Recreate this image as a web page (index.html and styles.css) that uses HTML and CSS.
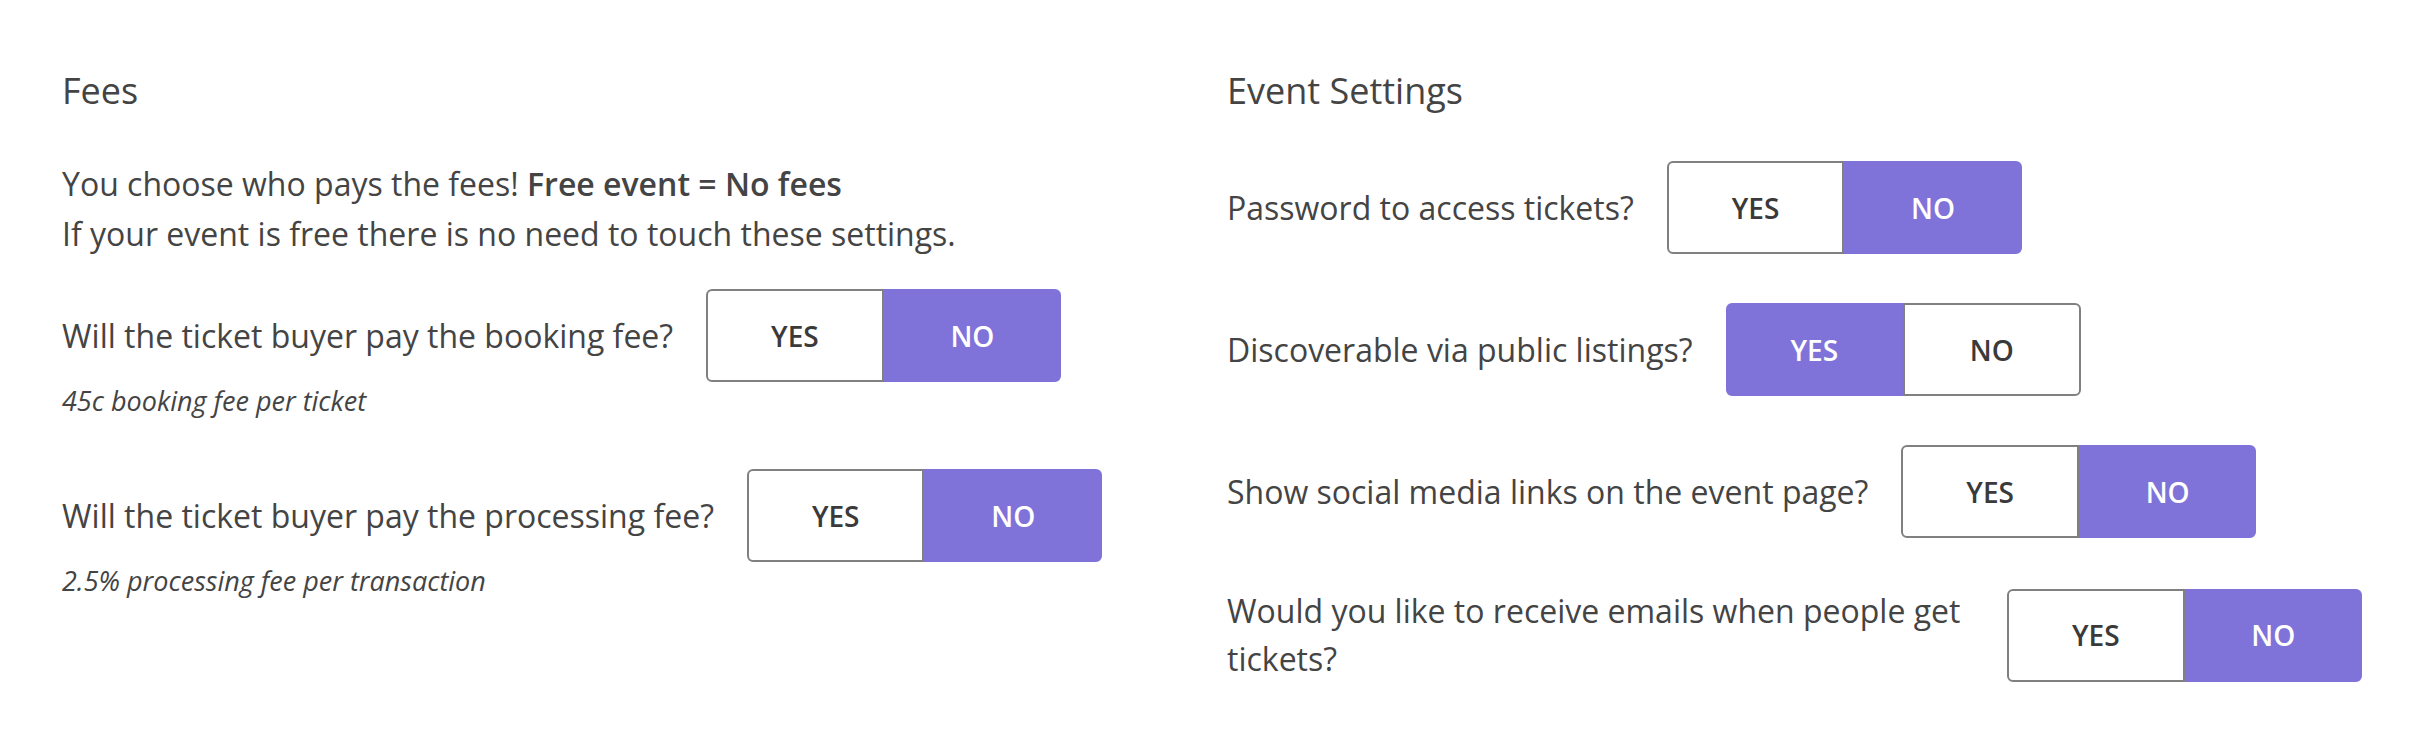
FILE: index.html
```html
<!DOCTYPE html>
<html lang="en">
<head>
<meta charset="utf-8">
<title>Fees and Event Settings</title>
<link rel="stylesheet" href="styles.css">
</head>
<body>
<div class="page">
  <section class="col">
    <h2 class="heading">Fees</h2>
    <p class="intro">You choose who pays the fees! <strong>Free event = No fees</strong><br>If your event is free there is no need to touch these settings.</p>
    <div class="setting first">
      <div class="row">
        <span class="label">Will the ticket buyer pay the booking fee?</span>
        <div class="toggle">
          <button class="opt">YES</button>
          <button class="opt active">NO</button>
        </div>
      </div>
      <p class="note">45c booking fee per ticket</p>
    </div>
    <div class="setting noted">
      <div class="row">
        <span class="label">Will the ticket buyer pay the processing fee?</span>
        <div class="toggle">
          <button class="opt">YES</button>
          <button class="opt active">NO</button>
        </div>
      </div>
      <p class="note">2.5% processing fee per transaction</p>
    </div>
  </section>
  <section class="col">
    <h2 class="heading">Event Settings</h2>
    <div class="setting">
      <div class="row">
        <span class="label">Password to access tickets?</span>
        <div class="toggle">
          <button class="opt">YES</button>
          <button class="opt active">NO</button>
        </div>
      </div>
    </div>
    <div class="setting">
      <div class="row">
        <span class="label">Discoverable via public listings?</span>
        <div class="toggle">
          <button class="opt active">YES</button>
          <button class="opt">NO</button>
        </div>
      </div>
    </div>
    <div class="setting">
      <div class="row">
        <span class="label">Show social media links on the event page?</span>
        <div class="toggle">
          <button class="opt">YES</button>
          <button class="opt active">NO</button>
        </div>
      </div>
    </div>
    <div class="setting">
      <div class="row">
        <span class="label">Would you like to receive emails when people get tickets?</span>
        <div class="toggle">
          <button class="opt">YES</button>
          <button class="opt active">NO</button>
        </div>
      </div>
    </div>
  </section>
</div>
</body>
</html>
```

FILE: styles.css
```css
* {
  box-sizing: border-box;
}

html, body {
  margin: 0;
  padding: 0;
  background: #ffffff;
}

body {
  font-family: "Open Sans", "Noto Sans", sans-serif;
  color: #444444;
}

.page {
  display: grid;
  grid-template-columns: 1135px 1135px;
  column-gap: 30px;
  padding: 69px 62px 0 62px;
}

.col {
  display: flex;
  flex-direction: column;
}

.heading {
  margin: 0;
  font-size: 36px;
  font-weight: 400;
  line-height: 43px;
  color: #444444;
}

.intro {
  margin: 47px 0 0 0;
  font-size: 32px;
  line-height: 50px;
}

.intro strong {
  font-weight: 600;
}

.setting {
  margin-top: 49px;
}

.setting.first {
  margin-top: 30px;
}

.setting.noted {
  margin-top: 50px;
}

.row {
  display: flex;
  align-items: center;
  gap: 33px;
}

.label {
  font-size: 32px;
  line-height: 48px;
}

.toggle {
  display: flex;
  flex: 0 0 355px;
  height: 93px;
}

.opt {
  flex: 1 1 0;
  margin: 0;
  padding: 0;
  border: 2px solid #808080;
  background: #ffffff;
  color: #3a3a3a;
  font-family: "Open Sans", "Noto Sans", sans-serif;
  font-size: 28px;
  font-weight: 600;
  cursor: pointer;
}

.opt:first-child {
  border-radius: 6px 0 0 6px;
}

.opt:last-child {
  border-radius: 0 6px 6px 0;
}

.opt.active {
  background: #7f73d9;
  border-color: #7f73d9;
  color: #ffffff;
}

.note {
  margin: 1px 0 0 0;
  font-size: 27px;
  line-height: 36px;
  font-style: italic;
}
```
